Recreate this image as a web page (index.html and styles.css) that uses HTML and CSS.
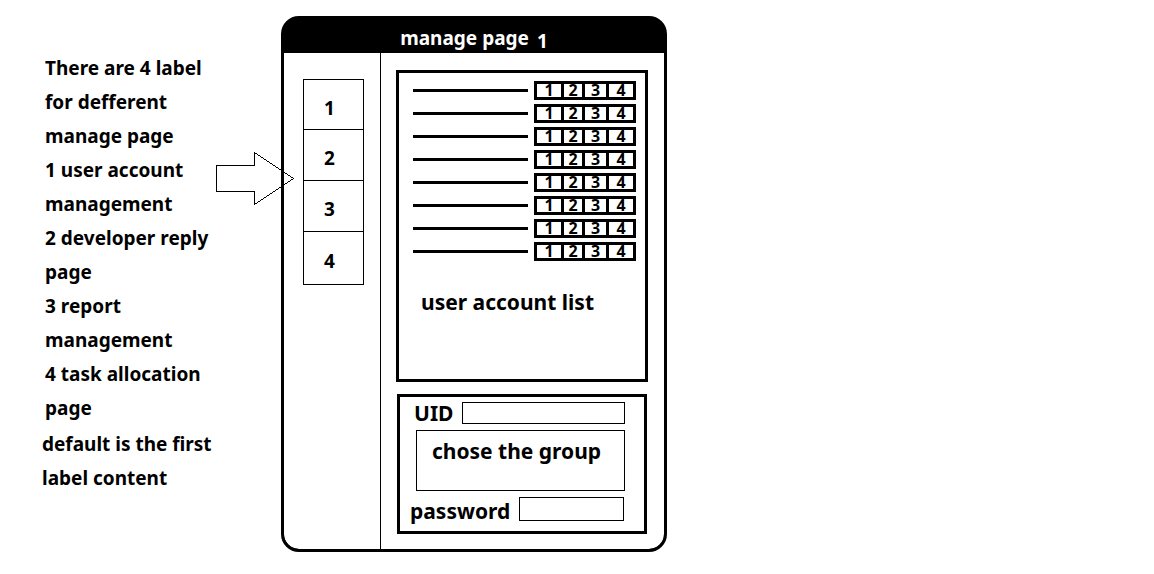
FILE: index.html
```html
<!DOCTYPE html>
<html lang="en">
<head>
<meta charset="utf-8">
<meta name="viewport" content="width=device-width, initial-scale=1">
<title>manage page 1</title>
<link rel="stylesheet" href="styles.css">
</head>
<body>
<main class="board">
  <aside class="notes">
    <p>There are 4 label for defferent manage page</p>
    <p>1 user account management</p>
    <p>2 developer reply page</p>
    <p>3 report management</p>
    <p>4 task allocation page</p>
    <p class="notes-default">default is the first label content</p>
  </aside>
  <div class="device">
    <svg class="arrow" width="80" height="56" viewBox="0 0 80 56" aria-hidden="true">
      <path d="M1.500 14.500H39.500V1.500L78.500 27.500L39.500 53.500V40.500H1.500Z" fill="none" stroke="#000" stroke-width="1" shape-rendering="crispEdges"/>
    </svg>
    <section class="frame">
      <header class="title"><h1>manage page</h1><span class="title-number">1</span></header>
      <div class="content">
        <nav class="side">
          <div class="tabs">
            <button type="button">1</button>
            <button type="button">2</button>
            <button type="button">3</button>
            <button type="button">4</button>
          </div>
        </nav>
        <div class="panels">
          <section class="panel accounts">
            <ul class="rows">
              <li class="row"><span class="line"></span><span class="actions"><button type="button">1</button><button type="button">2</button><button type="button">3</button><button type="button">4</button></span></li>
              <li class="row"><span class="line"></span><span class="actions"><button type="button">1</button><button type="button">2</button><button type="button">3</button><button type="button">4</button></span></li>
              <li class="row"><span class="line"></span><span class="actions"><button type="button">1</button><button type="button">2</button><button type="button">3</button><button type="button">4</button></span></li>
              <li class="row"><span class="line"></span><span class="actions"><button type="button">1</button><button type="button">2</button><button type="button">3</button><button type="button">4</button></span></li>
              <li class="row"><span class="line"></span><span class="actions"><button type="button">1</button><button type="button">2</button><button type="button">3</button><button type="button">4</button></span></li>
              <li class="row"><span class="line"></span><span class="actions"><button type="button">1</button><button type="button">2</button><button type="button">3</button><button type="button">4</button></span></li>
              <li class="row"><span class="line"></span><span class="actions"><button type="button">1</button><button type="button">2</button><button type="button">3</button><button type="button">4</button></span></li>
              <li class="row"><span class="line"></span><span class="actions"><button type="button">1</button><button type="button">2</button><button type="button">3</button><button type="button">4</button></span></li>
            </ul>
            <h2 class="caption">user account list</h2>
          </section>
          <form class="panel account-form">
            <div class="field"><label for="uid">UID</label><input id="uid" type="text"></div>
            <button class="group" type="button">chose the group</button>
            <div class="field field-password"><label for="password">password</label><input id="password" type="password"></div>
          </form>
        </div>
      </div>
    </section>
  </div>
</main>
</body>
</html>
```
FILE: styles.css
```css
* {
  box-sizing: border-box;
}

body {
  margin: 0;
  background: #fff;
  color: #000;
  font: bold 19px/34px "Noto Sans", "Open Sans", sans-serif;
}

button,
input {
  font: inherit;
  color: inherit;
  background: #fff;
  border: 1px solid #000;
  border-radius: 0;
  margin: 0;
  padding: 0;
  min-width: 0;
}

.board {
  display: grid;
  grid-template-columns: minmax(281px, 281fr) minmax(386px, 386fr) 487fr;
  align-items: start;
  padding: 16px 0;
}

.notes {
  max-width: 226px;
  padding: 35px 0 0 45px;
}

.notes p {
  margin: 0;
}

.notes .notes-default {
  margin: 2px 0 0 -3px;
}

.device {
  position: relative;
}

.arrow {
  position: absolute;
  top: 135px;
  left: -66px;
}

.frame {
  border: 3px solid #000;
  border-radius: 18px;
  background: #000;
  overflow: hidden;
}

.title {
  display: flex;
  justify-content: center;
  gap: 8px;
  padding: 5px 0 0;
  color: #fff;
}

.title h1 {
  margin: 0;
  font-size: 19px;
  line-height: 29px;
}

.title-number {
  padding-top: 5px;
  line-height: 24px;
}

.content {
  display: flex;
  background: #fff;
  border-radius: 0 0 15px 15px;
}

.side {
  flex: 97 0 97px;
  padding: 26px 16px 0 19px;
  border-right: 1px solid #000;
}

.tabs {
  display: flex;
  flex-direction: column;
  border: 1px solid #000;
}

.tabs button {
  height: 51px;
  padding: 6px 8px 0 0;
  border-width: 0 0 1px;
}

.tabs button:first-child {
  height: 50px;
}

.tabs button:last-child {
  height: 52px;
  border-bottom: 0;
}

.panels {
  display: flex;
  flex-direction: column;
  gap: 12px;
  flex: 283 1 283px;
  min-width: 0;
  padding: 17px 16px 15px 15px;
}

.panel {
  border: 3px solid #000;
}

.accounts {
  padding: 8px 9px 60px 14px;
}

.rows {
  display: flex;
  flex-direction: column;
  gap: 4px;
  margin: 0;
  padding: 0;
  list-style: none;
}

.row {
  display: flex;
  align-items: center;
  gap: 6px;
}

.line {
  flex: 1;
  height: 3px;
  background: #000;
}

.actions {
  display: grid;
  grid-template-columns: 24px 18px 21px 24px;
  gap: 3px;
  padding: 3px;
  background: #000;
}

.actions button {
  height: 13px;
  border: 0;
  font-size: 16px;
  line-height: 13px;
}

.caption {
  margin: 24px 0 0 8px;
  font-size: 21px;
  line-height: 34px;
}

.account-form {
  display: flex;
  flex-direction: column;
  gap: 6px;
  margin: 0 1px;
  padding: 5px 19px 9px 16px;
  font-size: 21px;
  line-height: 22px;
}

.field {
  display: flex;
  gap: 9px;
  margin-left: -2px;
}

.field input {
  flex: 1;
  height: 22px;
}

.group {
  height: 61px;
  padding: 0 8px 20px 0;
}

.field-password {
  margin: 0 1px 0 -6px;
}

.field-password label {
  padding-top: 3px;
}

.field-password input {
  height: 24px;
}
```
